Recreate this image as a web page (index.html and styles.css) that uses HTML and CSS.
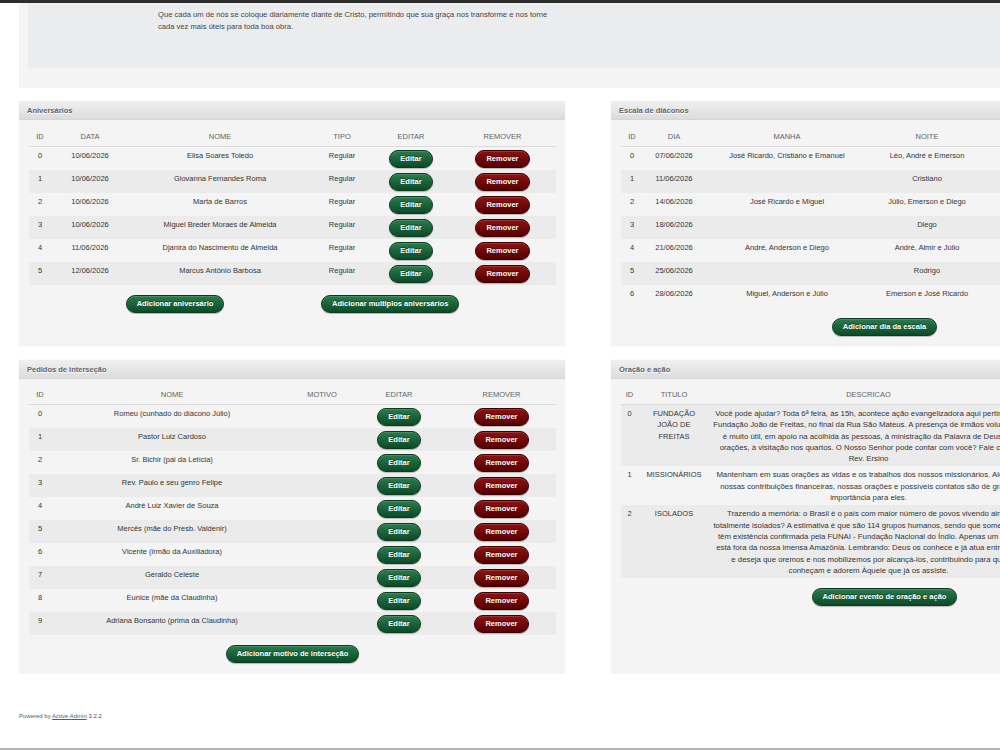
FILE: index.html
```html
<!DOCTYPE html>
<html lang="pt-BR">
<head>
    <meta charset="UTF-8">
    <meta name="viewport" content="width=device-width, initial-scale=1.0">
    <title>Dashboard</title>
    <link rel="stylesheet" href="styles.css">
</head>
<body>
    <div class="topbar"></div>

    <div class="page">
        <!-- Mensagem -->
        <div class="welcome">
            <div class="welcome-inner">
                <p>Que cada um de nós se coloque diariamente diante de Cristo, permitindo que sua graça nos transforme e nos torne<br>cada vez mais úteis para toda boa obra.</p>
            </div>
        </div>

        <div class="columns">
            <!-- Aniversarios -->
            <div class="panel">
                <h3>Aniversários</h3>
                <div class="panel-contents">
                    <table class="niver">
                        <thead>
                            <tr><th class="c-id">ID</th><th class="c-data">Data</th><th class="c-nome">Nome</th><th class="c-tipo">Tipo</th><th class="c-edit">Editar</th><th>Remover</th></tr>
                        </thead>
                        <tbody>
                            <tr class="even"><td>0</td><td>10/06/2026</td><td>Elisa Soares Toledo</td><td>Regular</td><td><a class="btn">Editar</a></td><td><a class="btn red">Remover</a></td></tr>
                            <tr class="odd"><td>1</td><td>10/06/2026</td><td>Giovanna Fernandes Roma</td><td>Regular</td><td><a class="btn">Editar</a></td><td><a class="btn red">Remover</a></td></tr>
                            <tr class="even"><td>2</td><td>10/06/2026</td><td>Marta de Barros</td><td>Regular</td><td><a class="btn">Editar</a></td><td><a class="btn red">Remover</a></td></tr>
                            <tr class="odd"><td>3</td><td>10/06/2026</td><td>Miguel Breder Moraes de Almeida</td><td>Regular</td><td><a class="btn">Editar</a></td><td><a class="btn red">Remover</a></td></tr>
                            <tr class="even"><td>4</td><td>11/06/2026</td><td>Djanira do Nascimento de Almeida</td><td>Regular</td><td><a class="btn">Editar</a></td><td><a class="btn red">Remover</a></td></tr>
                            <tr class="odd"><td>5</td><td>12/06/2026</td><td>Marcus Antônio Barbosa</td><td>Regular</td><td><a class="btn">Editar</a></td><td><a class="btn red">Remover</a></td></tr>
                        </tbody>
                    </table>
                    <div class="actions spread">
                        <a class="btn">Adicionar aniversário</a>
                        <a class="btn">Adicionar multiplos aniversários</a>
                    </div>
                </div>
            </div>

            <!-- Escala -->
            <div class="panel">
                <h3>Escala de diáconos</h3>
                <div class="panel-contents">
                    <table class="escala">
                        <thead>
                            <tr><th class="c-id">ID</th><th class="c-dia">Dia</th><th class="c-manha">Manha</th><th class="c-noite">Noite</th><th class="c-edit2">Editar</th><th>Remover</th></tr>
                        </thead>
                        <tbody>
                            <tr class="even"><td>0</td><td>07/06/2026</td><td>José Ricardo, Cristiano e Emanuel</td><td>Léo, André e Emerson</td><td><a class="btn">Editar</a></td><td><a class="btn red">Remover</a></td></tr>
                            <tr class="odd"><td>1</td><td>11/06/2026</td><td></td><td>Cristiano</td><td><a class="btn">Editar</a></td><td><a class="btn red">Remover</a></td></tr>
                            <tr class="even"><td>2</td><td>14/06/2026</td><td>José Ricardo e Miguel</td><td>Júlio, Emerson e Diego</td><td><a class="btn">Editar</a></td><td><a class="btn red">Remover</a></td></tr>
                            <tr class="odd"><td>3</td><td>18/06/2026</td><td></td><td>Diego</td><td><a class="btn">Editar</a></td><td><a class="btn red">Remover</a></td></tr>
                            <tr class="even"><td>4</td><td>21/06/2026</td><td>André, Anderson e Diego</td><td>André, Almir e Júlio</td><td><a class="btn">Editar</a></td><td><a class="btn red">Remover</a></td></tr>
                            <tr class="odd"><td>5</td><td>25/06/2026</td><td></td><td>Rodrigo</td><td><a class="btn">Editar</a></td><td><a class="btn red">Remover</a></td></tr>
                            <tr class="even"><td>6</td><td>28/06/2026</td><td>Miguel, Anderson e Júlio</td><td>Emerson e José Ricardo</td><td><a class="btn">Editar</a></td><td><a class="btn red">Remover</a></td></tr>
                        </tbody>
                    </table>
                    <div class="actions">
                        <a class="btn">Adicionar dia da escala</a>
                    </div>
                </div>
            </div>

            <!-- Pedidos -->
            <div class="panel">
                <h3>Pedidos de interseção</h3>
                <div class="panel-contents">
                    <table class="pedidos">
                        <thead>
                            <tr><th class="c-id">ID</th><th class="c-pnome">Nome</th><th class="c-motivo">Motivo</th><th class="c-pedit">Editar</th><th>Remover</th></tr>
                        </thead>
                        <tbody>
                            <tr class="even"><td>0</td><td>Romeu (cunhado do diácono Júlio)</td><td></td><td><a class="btn">Editar</a></td><td><a class="btn red">Remover</a></td></tr>
                            <tr class="odd"><td>1</td><td>Pastor Luiz Cardoso</td><td></td><td><a class="btn">Editar</a></td><td><a class="btn red">Remover</a></td></tr>
                            <tr class="even"><td>2</td><td>Sr. Bichir (pai da Letícia)</td><td></td><td><a class="btn">Editar</a></td><td><a class="btn red">Remover</a></td></tr>
                            <tr class="odd"><td>3</td><td>Rev. Paulo e seu genro Felipe</td><td></td><td><a class="btn">Editar</a></td><td><a class="btn red">Remover</a></td></tr>
                            <tr class="even"><td>4</td><td>André Luiz Xavier de Souza</td><td></td><td><a class="btn">Editar</a></td><td><a class="btn red">Remover</a></td></tr>
                            <tr class="odd"><td>5</td><td>Mercês (mãe do Presb. Valdenir)</td><td></td><td><a class="btn">Editar</a></td><td><a class="btn red">Remover</a></td></tr>
                            <tr class="even"><td>6</td><td>Vicente (irmão da Auxiliadora)</td><td></td><td><a class="btn">Editar</a></td><td><a class="btn red">Remover</a></td></tr>
                            <tr class="odd"><td>7</td><td>Geraldo Celeste</td><td></td><td><a class="btn">Editar</a></td><td><a class="btn red">Remover</a></td></tr>
                            <tr class="even"><td>8</td><td>Eunice (mãe da Claudinha)</td><td></td><td><a class="btn">Editar</a></td><td><a class="btn red">Remover</a></td></tr>
                            <tr class="odd"><td>9</td><td>Adriana Bonsanto (prima da Claudinha)</td><td></td><td><a class="btn">Editar</a></td><td><a class="btn red">Remover</a></td></tr>
                        </tbody>
                    </table>
                    <div class="actions">
                        <a class="btn">Adicionar motivo de interseção</a>
                    </div>
                </div>
            </div>

            <!-- Oracao e acao -->
            <div class="panel">
                <h3>Oração e ação</h3>
                <div class="panel-contents">
                    <table class="oracao">
                        <thead>
                            <tr><th class="c-oid">ID</th><th class="c-titulo">Titulo</th><th class="c-desc">Descricao</th><th class="c-edit2">Editar</th><th>Remover</th></tr>
                        </thead>
                        <tbody>
                            <tr class="odd"><td>0</td><td class="titulo">FUNDAÇÃO JOÃO DE FREITAS</td><td class="desc">Você pode ajudar? Toda 6ª feira, às 15h, acontece ação evangelizadora aqui pertinho da Fundação João de Freitas, no final da Rua São Mateus. A presença de irmãos voluntários é muito útil, em apoio na acolhida às pessoas, à ministração da Palavra de Deus, às orações, à visitação nos quartos. O Nosso Senhor pode contar com você? Fale com o Rev. Ersino</td><td><a class="btn">Editar</a></td><td><a class="btn red">Remover</a></td></tr>
                            <tr class="even"><td>1</td><td class="titulo">MISSIONÁRIOS</td><td class="desc">Mantenham em suas orações as vidas e os trabalhos dos nossos missionários. Além de nossas contribuições financeiras, nossas orações e possíveis contatos são de grande importância para eles.</td><td><a class="btn">Editar</a></td><td><a class="btn red">Remover</a></td></tr>
                            <tr class="odd"><td>2</td><td class="titulo">ISOLADOS</td><td class="desc">Trazendo a memória: o Brasil é o país com maior número de povos vivendo ainda totalmente isolados? A estimativa é que são 114 grupos humanos, sendo que somente 28 têm existência confirmada pela FUNAI - Fundação Nacional do Índio. Apenas um deles está fora da nossa imensa Amazônia. Lembrando: Deus os conhece e já atua entre eles e&nbsp;deseja que oremos e nos mobilizemos por alcançá-los, contribuindo para que conheçam&nbsp;e&nbsp;adorem Àquele que já os assiste.</td><td><a class="btn">Editar</a></td><td><a class="btn red">Remover</a></td></tr>
                        </tbody>
                    </table>
                    <div class="actions">
                        <a class="btn">Adicionar evento de oração e ação</a>
                    </div>
                </div>
            </div>
        </div>

        <div class="footer">
            Powered by <a href="#">Active Admin</a> 3.2.2
        </div>
    </div>

    <div class="bottombar"></div>
</body>
</html>
```

FILE: styles.css
```css
*{
    margin: 0;
    padding: 0;
    box-sizing: border-box;
}
html{
    overflow: hidden;
}
body{
    font-family: "Liberation Sans", Arial, sans-serif;
    font-size: 7.5px;
    color: #323537;
    background: #fff;
    height: 750px;
    position: relative;
}

.topbar{
    height: 3px;
    background: #2c2c2c;
}

.page{
    width: 1176px;
    padding: 0 19px;
}

/* mensagem do topo */
.welcome{
    background: #f4f4f4;
    height: 85px;
    padding: 0 0 0 9px;
}
.welcome-inner{
    background: #ebecee;
    height: 65px;
    padding: 6px 0 0 130px;
}
.welcome-inner p{
    font-size: 7.6px;
    line-height: 12px;
    color: #444;
}

/* colunas */
.columns{
    display: grid;
    grid-template-columns: 546px 546px;
    column-gap: 46px;
    row-gap: 14px;
    margin-top: 13px;
}

.panel{
    background: #f4f4f4;
    box-shadow: 0 0 1px rgba(0,0,0,0.12);
    display: flex;
    flex-direction: column;
}
.panel h3{
    height: 19px;
    line-height: 20px;
    padding-left: 8px;
    font-size: 7.5px;
    font-weight: bold;
    color: #5e6469;
    background: linear-gradient(#f0f0f0, #dcdcdc);
    border-bottom: 1px solid #d6d6d6;
    text-shadow: 0 1px 0 #fff;
}
.panel-contents{
    padding: 8px 9px 10px 10px;
}

/* tabelas */
table{
    width: 527px;
    border-collapse: collapse;
    table-layout: fixed;
}
th{
    height: 18px;
    font-weight: normal;
    text-transform: uppercase;
    color: #5e6469;
    text-align: center;
    border-bottom: 1px solid #dcdcdc;
    vertical-align: middle;
    padding-bottom: 1px;
}
td{
    text-align: center;
    vertical-align: top;
    padding: 3px 2px 2px;
    line-height: 11.3px;
    height: 23px;
}
tr.odd td{
    background: #ebebec;
}

.c-id{ width: 22px; }
.c-data{ width: 78px; }
.c-nome{ width: 182px; }
.c-tipo{ width: 62px; }
.c-edit{ width: 76px; }

.c-dia{ width: 62px; }
.c-manha{ width: 164px; }
.c-noite{ width: 116px; }
.c-edit2{ width: 80px; }

.c-pnome{ width: 242px; }
.c-motivo{ width: 58px; }
.c-pedit{ width: 96px; }

.c-oid{ width: 17px; }
.c-titulo{ width: 72px; }
.c-desc{ width: 317px; }
td.titulo{
    padding-left: 7px;
    padding-right: 7px;
}
td.desc{
    font-size: 7.8px;
    padding-left: 1px;
    padding-right: 1px;
}

/* botoes */
.btn{
    display: inline-block;
    height: 18px;
    line-height: 16px;
    padding: 0 10px;
    border-radius: 9px;
    border: 1px solid #0c3a20;
    background: linear-gradient(#2a7c4c, #0b4b27);
    color: #fff;
    font-weight: bold;
    text-decoration: none;
    text-shadow: 0 -1px 0 rgba(0,0,0,0.4);
    box-shadow: 0 1px 1px rgba(0,0,0,0.25), inset 0 1px 0 rgba(255,255,255,0.15);
    white-space: nowrap;
    cursor: pointer;
}
.btn.red{
    border-color: #3c0000;
    background: linear-gradient(#8e1111, #560000);
}

.actions{
    width: 527px;
    display: flex;
    justify-content: center;
    margin-top: 10px;
}
.actions.spread{
    justify-content: space-evenly;
}

/* rodape */
.footer{
    margin-top: 40px;
    font-size: 6px;
    color: #555;
}
.footer a{
    color: #38678b;
}

.bottombar{
    position: absolute;
    left: 0;
    right: 0;
    bottom: 0;
    height: 2px;
    background: #b4b4b4;
}
```
